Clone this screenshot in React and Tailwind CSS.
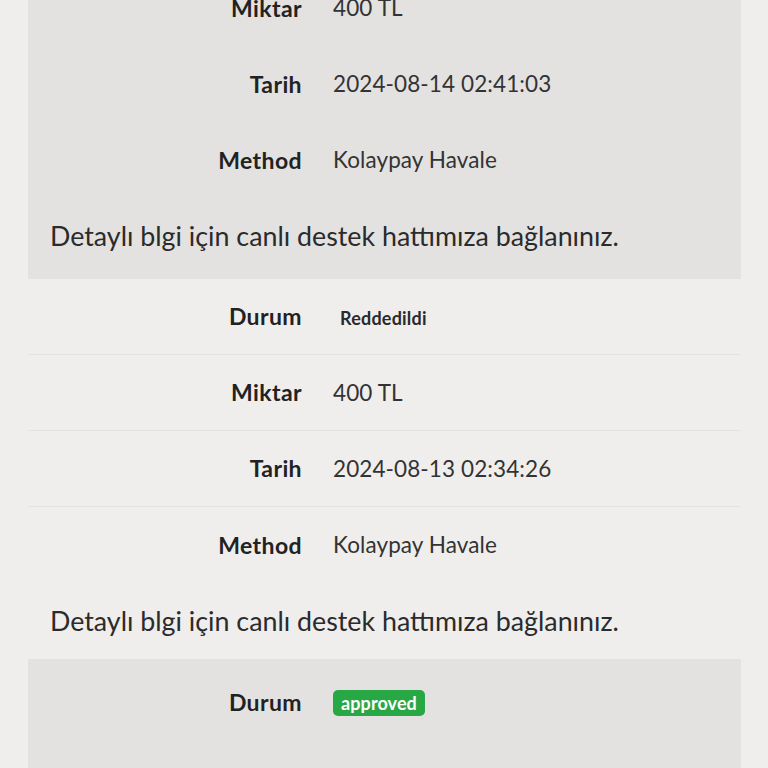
const RECORDS = [
  { status: "pending", amount: "400 TL", date: "2024-08-14 02:41:03", method: "Kolaypay Havale" },
  { status: "rejected", amount: "400 TL", date: "2024-08-13 02:34:26", method: "Kolaypay Havale" },
  { status: "approved", amount: "400 TL", date: "2024-08-12 01:12:40", method: "Kolaypay Havale" },
];

function StatusBadge({ status }) {
  if (status === "approved") {
    return (
      <span className="inline-block rounded-[5px] bg-[#28a745] px-[8px] py-[2px] text-[18px] font-bold leading-[22px] text-white">
        approved
      </span>
    );
  }
  return (
    <span className="inline-block px-[7px] py-[2px] text-[18px] font-bold leading-[22px] tracking-[0.2px] text-[#2a2a2a]">
      {status === "rejected" ? "Reddedildi" : "Beklemede"}
    </span>
  );
}

function Row({ label, children, divider }) {
  return (
    <div className={`flex h-[76px] items-center ${divider ? "border-b border-[#e4e3e2]" : ""}`}>
      <div className="w-[274px] shrink-0 text-right text-[23px] font-bold tracking-[0.4px] text-[#222]">{label}</div>
      <div className="pl-[31px] text-[22.5px] tracking-[0.1px] text-[#333]">{children}</div>
    </div>
  );
}

function Card({ rec, striped, hideStatus }) {
  return (
    <div className={striped ? "bg-[#e3e2e1] py-[5px]" : ""}>
      {!hideStatus && (
        <Row label="Durum" divider={!striped}>
          <StatusBadge status={rec.status} />
        </Row>
      )}
      <Row label="Miktar" divider={!striped}>{rec.amount}</Row>
      <Row label="Tarih" divider={!striped}>{rec.date}</Row>
      <Row label="Method">{rec.method}</Row>
      <p className="flex h-[76px] items-center px-[22px] text-[26.8px] text-[#2b2b2b]">
        Detaylı blgi için canlı destek hattımıza bağlanınız.
      </p>
    </div>
  );
}

export default function App() {
  return (
    <div className="h-[768px] overflow-hidden bg-[#efeeed] font-['Lato',sans-serif]">
      <div className="mx-[28px] mt-[-35px] w-[713px]">
        <Card rec={RECORDS[0]} striped hideStatus />
        <Card rec={RECORDS[1]} />
        <Card rec={RECORDS[2]} striped />
      </div>
    </div>
  );
}
